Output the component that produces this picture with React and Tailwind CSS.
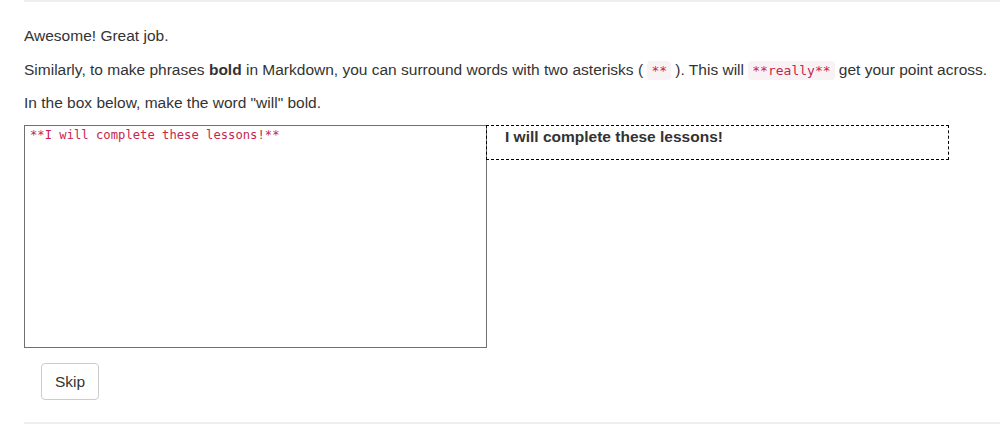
import { useState } from 'react';

const Code = ({ children }) => (
  <code className="bg-[#f9f2f4] text-[#c7254e] px-1 py-0.5 rounded text-[13px] font-['DejaVu_Sans_Mono',monospace]">
    {children}
  </code>
);

export default function App() {
  const [text, setText] = useState('**I will complete these lessons!**');

  return (
    <div className="bg-white w-[1000px] h-[428px] overflow-hidden font-['Liberation_Sans',Arial,sans-serif] text-[15.5px] text-[#333]">
      <div className="ml-6 border-t-2 border-[#eee]">
        {/* Lesson text */}
        <p className="pt-6 leading-5 mb-[14px]">Awesome! Great job.</p>
        <p className="leading-5 mb-3">
          Similarly, to make phrases <strong>bold</strong> in Markdown, you can surround words with two asterisks ( <Code>**</Code> ). This will <Code>**really**</Code> get your point across.
        </p>
        <p className="leading-5 mb-3">In the box below, make the word "will" bold.</p>

        {/* Editor + preview */}
        <div className="flex items-start">
          <textarea
            value={text}
            onChange={(e) => setText(e.target.value)}
            className="w-[463px] h-[223px] border border-[#707070] px-[5px] pt-px pb-0 resize-none outline-none text-[12.2px] leading-[16px] text-[#c7254e] font-['DejaVu_Sans_Mono',monospace]"
          />
          <div className="w-[463px] h-[35px] -ml-px border border-dashed border-black pl-[18px] pt-px leading-5 font-bold">
            I will complete these lessons!
          </div>
        </div>

        <div className="pl-[17px] pt-[15px] pb-[22px]">
          <button className="w-[58px] h-[37px] border border-[#ccc] rounded bg-white text-[#333]">
            Skip
          </button>
        </div>
        <div className="border-t-2 border-[#eee]" />
      </div>
    </div>
  );
}
